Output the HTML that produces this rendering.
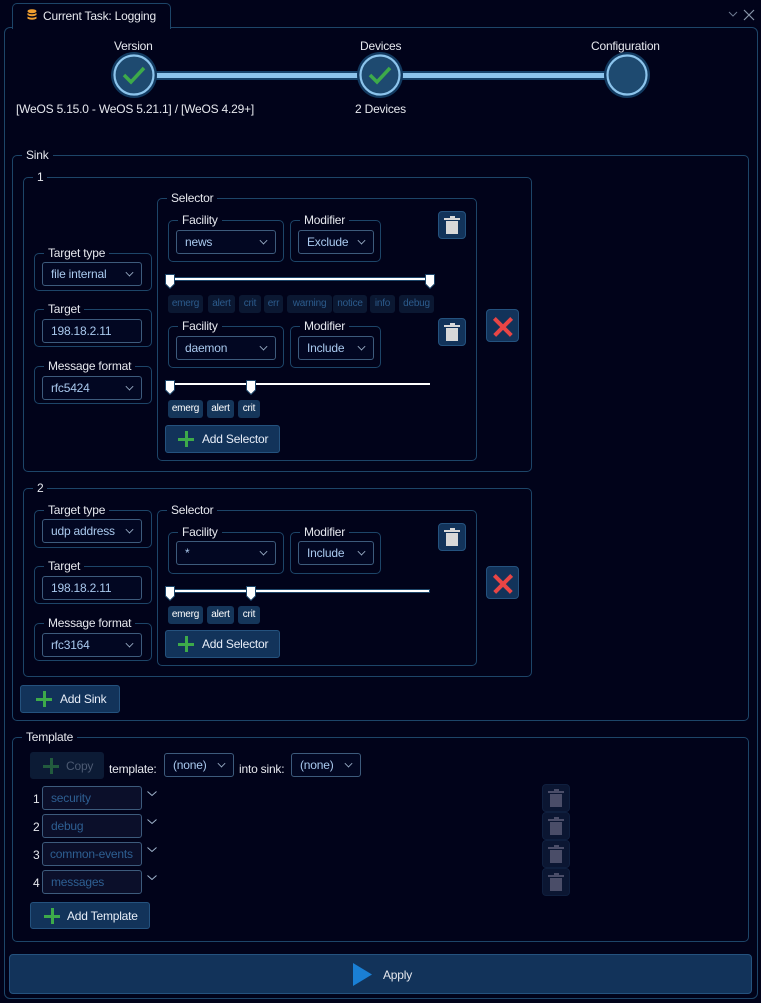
<!DOCTYPE html>
<html><head><meta charset="utf-8"><style>
*{box-sizing:border-box;margin:0;padding:0}
body{width:761px;height:1003px;background:#01031a;font-family:"Liberation Sans",sans-serif;font-size:12px;letter-spacing:-0.2px;color:#e6e8ee;position:relative;overflow:hidden}
.a{position:absolute}
.fs{position:absolute;border:1px solid #1d4568;border-radius:5px}
.lg{position:absolute;top:-8px;background:#01031a;padding:0 4px;color:#e6e8ee;font-size:12px;line-height:14px;white-space:nowrap}
.cb{position:absolute;border:1px solid #3d5b7c;border-radius:3px;background:#020722;color:#a9c9ee;font-size:12px;line-height:22px;padding-left:8px;white-space:nowrap}
.cb .ch{position:absolute;right:8px;top:6px;width:7px;height:7px;border-right:1px solid #9fb4cc;border-bottom:1px solid #9fb4cc;transform:rotate(45deg) scale(.8)}
.btn{position:absolute;background:#12335a;border:1px solid #24527e;border-radius:3px;color:#e8eef8;font-size:12px;line-height:26px;white-space:nowrap}
.plus{position:absolute;width:16px;height:16px;top:5px}
.plus:before{content:"";position:absolute;left:7px;top:0;width:2.5px;height:16px;background:#3daa4a}
.plus:after{content:"";position:absolute;top:7px;left:0;height:2.5px;width:16px;background:#3daa4a}
.tr{position:absolute;width:28px;height:28px;background:#12335a;border:1px solid #24527e;border-radius:4px}
.tr i{position:absolute;left:7px;top:9px;width:12px;height:13px;background:#d8d8d8}
.tr b{position:absolute;left:5px;top:6px;width:16px;height:2px;background:#d8d8d8}
.tr u{position:absolute;left:11px;top:4px;width:5px;height:2px;background:#d8d8d8}
.tr.d{background:#0b1632;border-color:#0f1f3e}
.tr.d i,.tr.d b,.tr.d u{background:#4a4d68}
.x{position:absolute;width:33px;height:33px;background:#12335a;border:1px solid #24527e;border-radius:4px}
.x:before,.x:after{content:"";position:absolute;left:4px;top:14.5px;width:24px;height:3.5px;background:#e84545;transform:rotate(45deg)}
.x:after{transform:rotate(-45deg)}
.chip{position:absolute;height:18px;border-radius:3px;background:#15365a;color:#fff;font-size:10px;line-height:18px;text-align:center}
.chip.d{background:#0b1832;color:#2c5b8c}
.track{position:absolute;height:3px;background:#fff;border:0}
.th{position:absolute;width:10px;height:15px}
.num{position:absolute;color:#e6e8ee}
.lbl{position:absolute;color:#e6e8ee}
</style></head><body>

<div class="a" style="left:12px;top:3px;width:159px;height:26px;border:1px solid #1d4568;border-bottom:none;border-radius:5px 5px 0 0;background:#01031a;z-index:2"></div>
<svg class="a" style="left:27px;top:9px;z-index:3" width="10" height="12" viewBox="0 0 10 12"><ellipse cx="5" cy="2.2" rx="4.5" ry="2" fill="#f0a030"/><path d="M0.5 4 Q5 6.5 9.5 4 V6 Q5 8.5 0.5 6Z" fill="#f0a030"/><path d="M0.5 7.6 Q5 10 9.5 7.6 V9.6 Q5 12 0.5 9.6Z" fill="#f0a030"/></svg>
<div class="a" style="left:43px;top:9px;z-index:3;font-size:12px">Current Task: Logging</div>
<svg class="a" style="left:728px;top:9px" width="28" height="12"><path d="M1 3 L5 7 L9 3" stroke="#6d7a90" fill="none"/><path d="M16 1 L26 11 M26 1 L16 11" stroke="#8896aa" fill="none" stroke-width="1.2"/></svg>

<div class="a" style="left:4px;top:27px;width:754px;height:972px;border:1px solid #1d4568;border-radius:6px"></div>

<div class="a" style="left:152px;top:71px;width:460px;height:9px;background:#16426a"></div>
<div class="a" style="left:152px;top:73px;width:460px;height:5px;background:#8cc4ec"></div>
<svg class="a" style="left:110px;top:51px" width="48" height="48"><circle cx="24" cy="24" r="23" fill="#123a60"/><circle cx="24" cy="24" r="19.5" fill="#1e4a70" stroke="#8cc4ec" stroke-width="2.2"/><path d="M14 24 L21 31 L34 17" stroke="#3daa4a" stroke-width="3.5" fill="none"/></svg>
<svg class="a" style="left:356px;top:51px" width="48" height="48"><circle cx="24" cy="24" r="23" fill="#123a60"/><circle cx="24" cy="24" r="19.5" fill="#1e4a70" stroke="#8cc4ec" stroke-width="2.2"/><path d="M14 24 L21 31 L34 17" stroke="#3daa4a" stroke-width="3.5" fill="none"/></svg>
<svg class="a" style="left:603px;top:51px" width="48" height="48"><circle cx="24" cy="24" r="23" fill="#123a60"/><circle cx="24" cy="24" r="19.5" fill="#1e4a70" stroke="#8cc4ec" stroke-width="2.2"/></svg>
<div class="lbl" style="left:114px;top:39px">Version</div>
<div class="lbl" style="left:360px;top:39px">Devices</div>
<div class="lbl" style="left:591px;top:39px">Configuration</div>
<div class="lbl" style="left:16px;top:102px">[WeOS 5.15.0 - WeOS 5.21.1] / [WeOS 4.29+]</div>
<div class="lbl" style="left:355px;top:102px">2 Devices</div>

<div class="fs" style="left:12px;top:155px;width:737px;height:566px"><div class="lg" style="left:9px">Sink</div></div>

<div class="fs" style="left:23px;top:177px;width:509px;height:295px"><div class="lg" style="left:9px">1</div></div>
<div class="fs" style="left:34px;top:253px;width:118px;height:38px"><div class="lg" style="left:9px">Target type</div></div>
<div class="cb" style="left:42px;top:262px;width:100px;height:24px">file internal<span class="ch"></span></div>
<div class="fs" style="left:34px;top:309px;width:118px;height:38px"><div class="lg" style="left:9px">Target</div></div>
<div class="cb" style="left:42px;top:319px;width:100px;height:24px">198.18.2.11</div>
<div class="fs" style="left:34px;top:366px;width:118px;height:38px"><div class="lg" style="left:9px">Message format</div></div>
<div class="cb" style="left:42px;top:376px;width:100px;height:24px">rfc5424<span class="ch"></span></div>

<div class="fs" style="left:157px;top:198px;width:320px;height:263px"><div class="lg" style="left:9px">Selector</div></div>
<div class="fs" style="left:168px;top:220px;width:116px;height:42px"><div class="lg" style="left:9px">Facility</div></div>
<div class="cb" style="left:176px;top:230px;width:100px;height:24px">news<span class="ch"></span></div>
<div class="fs" style="left:290px;top:220px;width:91px;height:42px"><div class="lg" style="left:9px">Modifier</div></div>
<div class="cb" style="left:298px;top:230px;width:76px;height:24px">Exclude<span class="ch"></span></div>
<div class="tr" style="left:438px;top:211px"><u></u><b></b><i></i></div>
<div class="track" style="left:170px;top:277px;width:260px;border:1px solid #1d4568;height:4px"></div>
<svg class="th" style="left:165px;top:274px"><path d="M0.5 0.5H9.5V10L5 14.5L0.5 10Z" fill="#fff" stroke="#1d4568"/></svg>
<svg class="th" style="left:425px;top:274px"><path d="M0.5 0.5H9.5V10L5 14.5L0.5 10Z" fill="#fff" stroke="#1d4568"/></svg>
<div class="chip d" style="left:168px;top:295px;width:35px">emerg</div>
<div class="chip d" style="left:208px;top:295px;width:27px">alert</div>
<div class="chip d" style="left:239px;top:295px;width:22px">crit</div>
<div class="chip d" style="left:264px;top:295px;width:19px">err</div>
<div class="chip d" style="left:287px;top:295px;width:45px">warning</div>
<div class="chip d" style="left:333px;top:295px;width:34px">notice</div>
<div class="chip d" style="left:370px;top:295px;width:25px">info</div>
<div class="chip d" style="left:399px;top:295px;width:35px">debug</div>
<div class="fs" style="left:168px;top:326px;width:116px;height:42px"><div class="lg" style="left:9px">Facility</div></div>
<div class="cb" style="left:176px;top:336px;width:100px;height:24px">daemon<span class="ch"></span></div>
<div class="fs" style="left:290px;top:326px;width:91px;height:42px"><div class="lg" style="left:9px">Modifier</div></div>
<div class="cb" style="left:298px;top:336px;width:76px;height:24px">Include<span class="ch"></span></div>
<div class="tr" style="left:438px;top:318px"><u></u><b></b><i></i></div>
<div class="track" style="left:170px;top:383px;width:260px;height:2px"></div>
<svg class="th" style="left:165px;top:380px"><path d="M0.5 0.5H9.5V10L5 14.5L0.5 10Z" fill="#fff" stroke="#1d4568"/></svg>
<svg class="th" style="left:246px;top:380px"><path d="M0.5 0.5H9.5V10L5 14.5L0.5 10Z" fill="#fff" stroke="#1d4568"/></svg>
<div class="chip" style="left:168px;top:400px;width:35px">emerg</div>
<div class="chip" style="left:207px;top:400px;width:27px">alert</div>
<div class="chip" style="left:238px;top:400px;width:22px">crit</div>
<div class="btn" style="left:165px;top:425px;width:115px;height:28px"><span class="plus" style="left:12px"></span><span style="position:absolute;left:36px">Add Selector</span></div>
<div class="x" style="left:486px;top:309px"></div>

<div class="fs" style="left:23px;top:488px;width:509px;height:189px"><div class="lg" style="left:9px">2</div></div>
<div class="fs" style="left:34px;top:510px;width:118px;height:38px"><div class="lg" style="left:9px">Target type</div></div>
<div class="cb" style="left:42px;top:519px;width:100px;height:24px">udp address<span class="ch"></span></div>
<div class="fs" style="left:34px;top:566px;width:118px;height:38px"><div class="lg" style="left:9px">Target</div></div>
<div class="cb" style="left:42px;top:576px;width:100px;height:24px">198.18.2.11</div>
<div class="fs" style="left:34px;top:623px;width:118px;height:38px"><div class="lg" style="left:9px">Message format</div></div>
<div class="cb" style="left:42px;top:633px;width:100px;height:24px">rfc3164<span class="ch"></span></div>
<div class="fs" style="left:157px;top:510px;width:320px;height:156px"><div class="lg" style="left:9px">Selector</div></div>
<div class="fs" style="left:168px;top:532px;width:116px;height:42px"><div class="lg" style="left:9px">Facility</div></div>
<div class="cb" style="left:176px;top:541px;width:100px;height:24px">*<span class="ch"></span></div>
<div class="fs" style="left:290px;top:532px;width:91px;height:42px"><div class="lg" style="left:9px">Modifier</div></div>
<div class="cb" style="left:298px;top:541px;width:76px;height:24px">Include<span class="ch"></span></div>
<div class="tr" style="left:438px;top:523px"><u></u><b></b><i></i></div>
<div class="track" style="left:170px;top:589px;width:260px;border:1px solid #1d4568;height:4px"></div>
<svg class="th" style="left:165px;top:586px"><path d="M0.5 0.5H9.5V10L5 14.5L0.5 10Z" fill="#fff" stroke="#1d4568"/></svg>
<svg class="th" style="left:246px;top:586px"><path d="M0.5 0.5H9.5V10L5 14.5L0.5 10Z" fill="#fff" stroke="#1d4568"/></svg>
<div class="chip" style="left:168px;top:606px;width:35px">emerg</div>
<div class="chip" style="left:207px;top:606px;width:27px">alert</div>
<div class="chip" style="left:238px;top:606px;width:22px">crit</div>
<div class="btn" style="left:165px;top:630px;width:115px;height:28px"><span class="plus" style="left:12px"></span><span style="position:absolute;left:36px">Add Selector</span></div>
<div class="x" style="left:486px;top:566px"></div>

<div class="btn" style="left:20px;top:685px;width:100px;height:28px"><span class="plus" style="left:15px"></span><span style="position:absolute;left:39px">Add Sink</span></div>

<div class="fs" style="left:12px;top:737px;width:737px;height:205px"><div class="lg" style="left:9px">Template</div></div>
<div class="btn" style="left:30px;top:752px;width:74px;height:27px;background:#0c1b35;border-color:#0c1b35;color:#4c5a72"><span class="plus" style="left:12px;opacity:.45"></span><span style="position:absolute;left:35px">Copy</span></div>
<div class="lbl" style="left:109px;top:762px">template:</div>
<div class="cb" style="left:164px;top:753px;width:70px;height:24px">(none)<span class="ch"></span></div>
<div class="lbl" style="left:239px;top:762px">into sink:</div>
<div class="cb" style="left:291px;top:753px;width:70px;height:24px">(none)<span class="ch"></span></div>

<div class="num" style="left:33px;top:792px">1</div>
<div class="cb" style="left:42px;top:786px;width:100px;height:24px;background:#0b0f2a;color:#2e5f92">security</div>
<div class="num" style="left:33px;top:820px">2</div>
<div class="cb" style="left:42px;top:814px;width:100px;height:24px;background:#0b0f2a;color:#2e5f92">debug</div>
<div class="num" style="left:33px;top:848px">3</div>
<div class="cb" style="left:42px;top:842px;width:100px;height:24px;background:#0b0f2a;color:#2e5f92;padding-left:7px">common-events</div>
<div class="num" style="left:33px;top:876px">4</div>
<div class="cb" style="left:42px;top:870px;width:100px;height:24px;background:#0b0f2a;color:#2e5f92">messages</div>
<svg class="a" style="left:146px;top:790px" width="12" height="90"><path d="M1.5 1.5 L6 5.5 L10.5 1.5 M1.5 29.5 L6 33.5 L10.5 29.5 M1.5 57.5 L6 61.5 L10.5 57.5 M1.5 85.5 L6 89.5 L10.5 85.5" stroke="#9fb4cc" fill="none"/></svg>
<div class="tr d" style="left:542px;top:784px"><u></u><b></b><i></i></div>
<div class="tr d" style="left:542px;top:812px"><u></u><b></b><i></i></div>
<div class="tr d" style="left:542px;top:840px"><u></u><b></b><i></i></div>
<div class="tr d" style="left:542px;top:868px"><u></u><b></b><i></i></div>
<div class="btn" style="left:30px;top:902px;width:120px;height:27px"><span class="plus" style="left:13px"></span><span style="position:absolute;left:36px">Add Template</span></div>

<div class="a" style="left:9px;top:954px;width:743px;height:40px;background:#12335a;border:1px solid #24527e;border-radius:4px"></div>
<svg class="a" style="left:353px;top:963px" width="20" height="23"><path d="M0 0 L19 11.5 L0 23Z" fill="#1a7fd4"/></svg>
<div class="lbl" style="left:383px;top:968px">Apply</div>
</body></html>
